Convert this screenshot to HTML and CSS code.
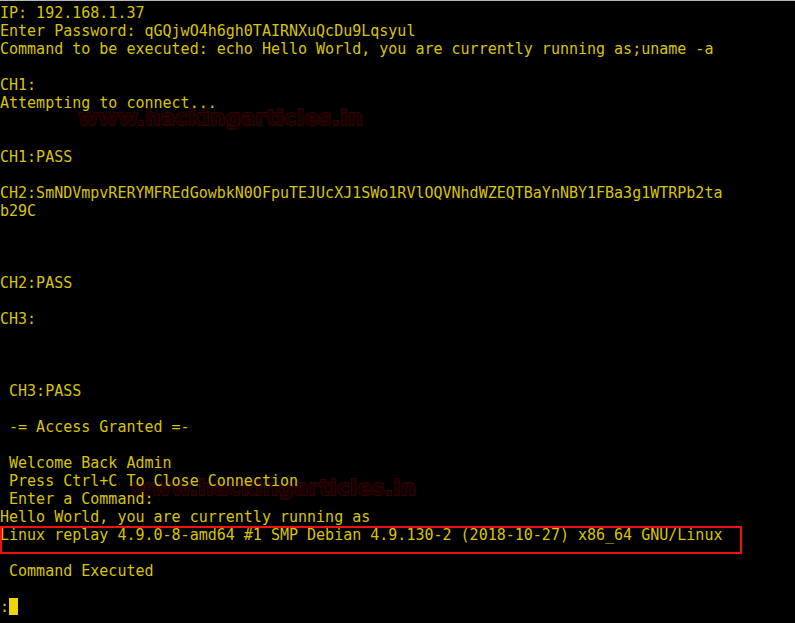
FILE: index.html
```html
<!DOCTYPE html>
<html>
<head>
<meta charset="utf-8">
<link rel="stylesheet" href="styles.css">
</head>
<body>
<div class="term">
<div class="mark mark-one">www.hackingarticles.in</div>
<div class="mark mark-two">www.hackingarticles.in</div>
<div class="screen">
<div class="line">IP: 192.168.1.37</div>
<div class="line">Enter Password: qGQjwO4h6gh0TAIRNXuQcDu9Lqsyul</div>
<div class="line">Command to be executed: echo Hello World, you are currently running as;uname -a</div>
<div class="line"> </div>
<div class="line">CH1:</div>
<div class="line">Attempting to connect...</div>
<div class="line"> </div>
<div class="line"> </div>
<div class="line">CH1:PASS</div>
<div class="line"> </div>
<div class="line">CH2:SmNDVmpvRERYMFREdGowbkN0OFpuTEJUcXJ1SWo1RVlOQVNhdWZEQTBaYnNBY1FBa3g1WTRPb2ta</div>
<div class="line">b29C</div>
<div class="line"> </div>
<div class="line"> </div>
<div class="line"> </div>
<div class="line">CH2:PASS</div>
<div class="line"> </div>
<div class="line">CH3:</div>
<div class="line"> </div>
<div class="line"> </div>
<div class="line"> </div>
<div class="line"> CH3:PASS</div>
<div class="line"> </div>
<div class="line"> -= Access Granted =-</div>
<div class="line"> </div>
<div class="line"> Welcome Back Admin</div>
<div class="line"> Press Ctrl+C To Close Connection</div>
<div class="line"> Enter a Command:</div>
<div class="line">Hello World, you are currently running as</div>
<div class="line">Linux replay 4.9.0-8-amd64 #1 SMP Debian 4.9.130-2 (2018-10-27) x86_64 GNU/Linux</div>
<div class="line"> </div>
<div class="line"> Command Executed</div>
<div class="line"> </div>
<div class="line">:<span class="cursor"></span></div>
</div>
<div class="highlight"></div>
</div>
</body>
</html>
```
FILE: styles.css
```css
html, body {
  margin: 0;
  padding: 0;
  background: #000;
}
.term {
  position: relative;
  width: 795px;
  height: 622px;
  border-top: 1px solid #b8b8b8;
  background: #000;
  overflow: hidden;
}
.screen {
  position: relative;
  z-index: 1;
  padding-top: 3px;
  font-family: "DejaVu Sans Mono", monospace;
  font-size: 15px;
  line-height: 18px;
  color: #d8c400;
}
.line {
  white-space: pre;
  height: 18px;
}
.cursor {
  display: inline-block;
  width: 9px;
  height: 17px;
  background: #f0d400;
  vertical-align: top;
}
.mark {
  position: absolute;
  z-index: 0;
  font-family: "DejaVu Sans", sans-serif;
  font-weight: bold;
  font-size: 21.7px;
  line-height: 22px;
  letter-spacing: 0;
  color: #180000;
  -webkit-text-stroke: 2px #2e0404;
  paint-order: stroke fill;
  white-space: nowrap;
}
.mark-one {
  left: 78px;
  top: 106px;
}
.mark-two {
  left: 131px;
  top: 476px;
}
.highlight {
  position: absolute;
  z-index: 2;
  left: 0;
  top: 525px;
  width: 742px;
  height: 28px;
  border: 2px solid #ee1111;
  box-sizing: border-box;
}
```
